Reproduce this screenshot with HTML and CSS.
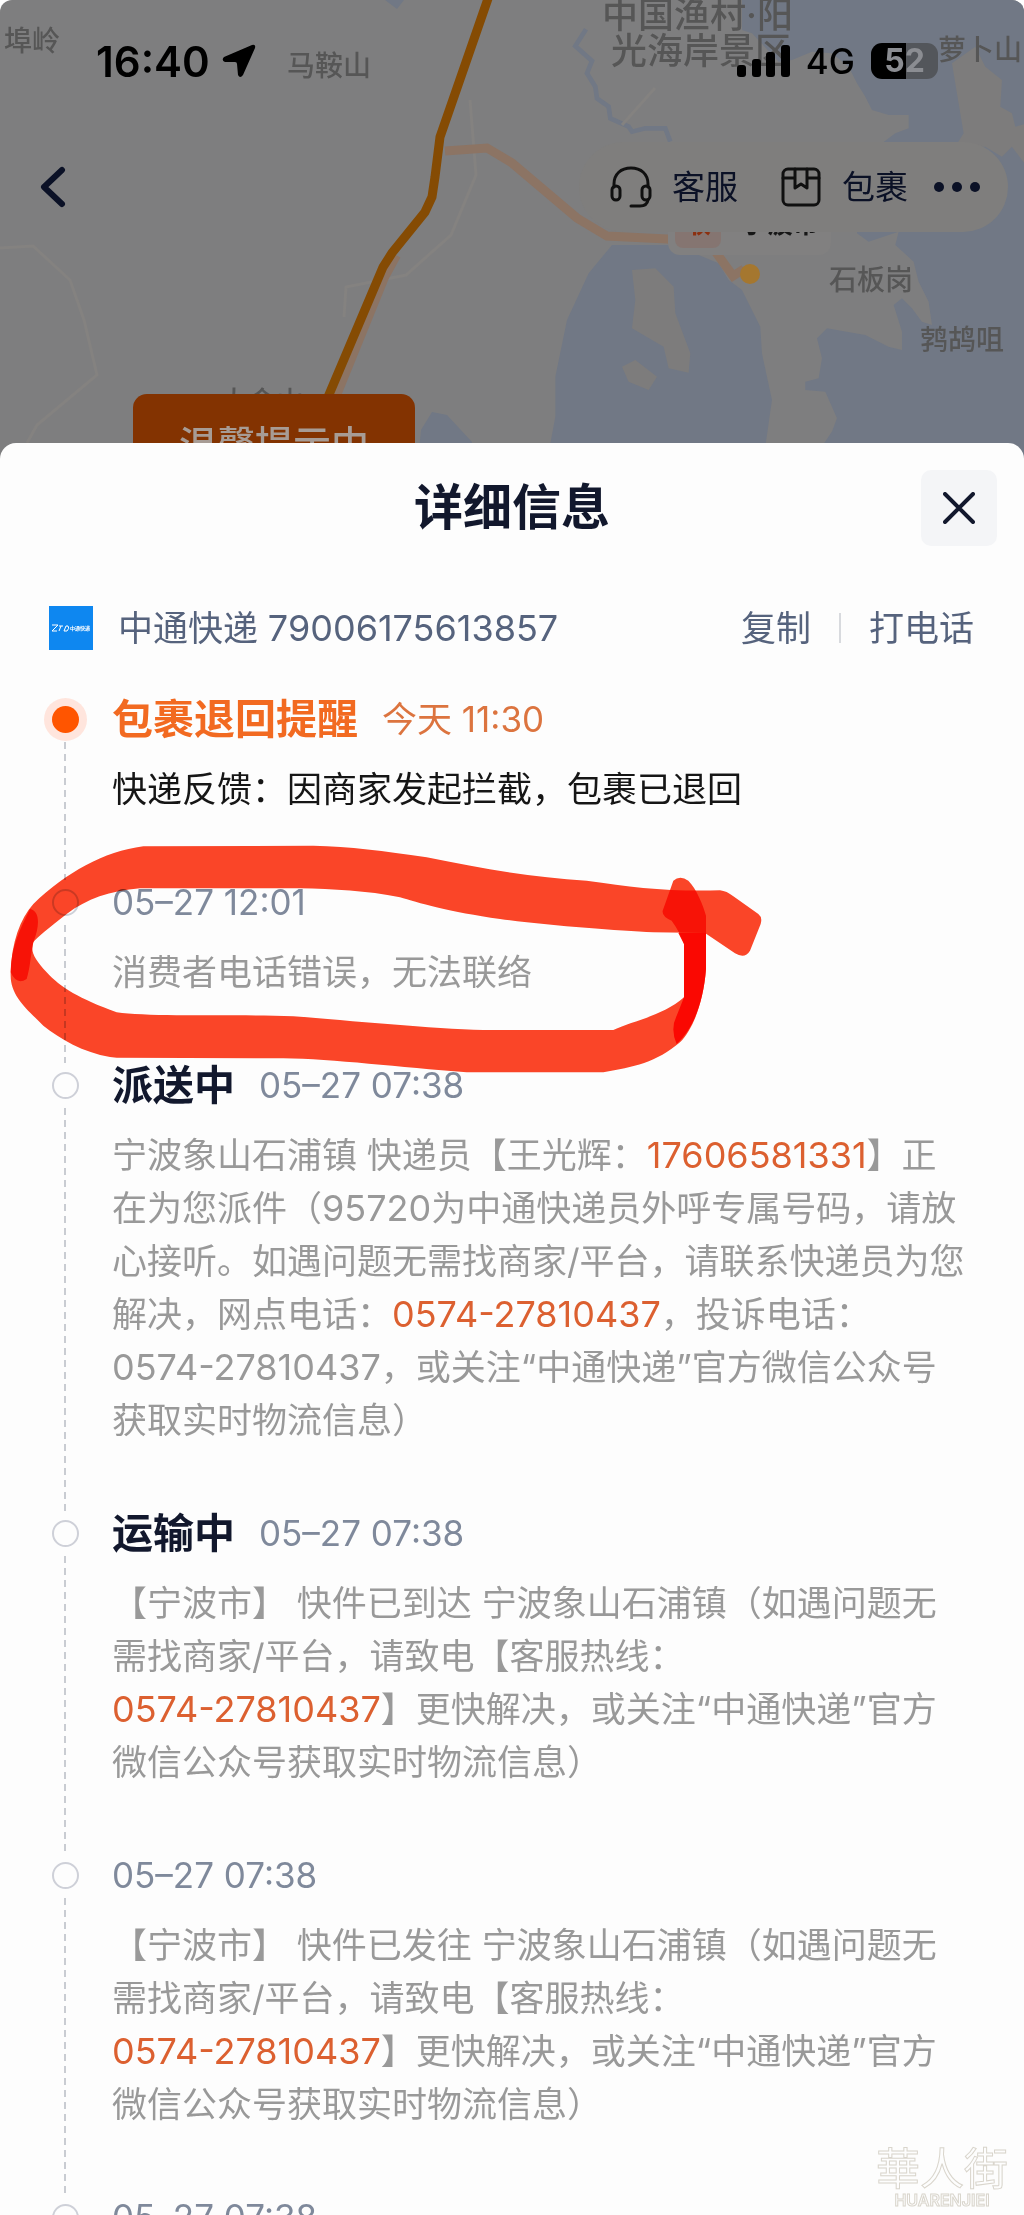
FILE: index.html
```html
<!DOCTYPE html>
<html lang="zh-CN">
<head>
    <meta charset="UTF-8">
    <meta name="viewport" content="width=device-width, initial-scale=1.0">
    <title>详细信息</title>
    <link rel="stylesheet" href="styles.css">
</head>
<body>
    <div class="app">
        <!-- 地图背景 -->
        <svg class="map" viewBox="0 0 1024 470" preserveAspectRatio="xMidYMin slice">
            <rect width="1024" height="470" fill="#7e7e7f"/>
            <g fill="#717885">
                <path d="M385 0l12 9 7-9zM421 430l11-18 15 3 25 27v28h-55z"/>
                <g transform="translate(512 0) scale(.3333)">
                    <path d="M690 0V90l30 10 80 85 40-5 60-25 60 5 50 40 25 50 25 40 20 40 50 15h60v40l-40 15-80 60-35 240 35 25 90-30-10 40 55 50 15 60 30 60 10 70-30-10-30-40-30-30-25 20 25 80v55l-40-10-70-35-115-20-30 30 15 60-10 60-40 10v25l60 5 35 80-15 40-60 90H1545V0z"/>
                    <path d="M300 735l-70 85-65 140-35 170v120l-30 160h650l30-210-30-140-5-80-55-110-40-30-30-50-60-25-90-30z"/>
                    <path fill="#7d7c7c" d="M1320 190l70-50 30 60 50 40-5 80 35 20 10 40 35-10v130l-45-60-30 30-50-30h-90l25-40zM360 810l70-5 55 55 5 80 45 120-5 58-60-13-15-65-95-55 10-85zM330 1100l40-20 65 50-25 40-60-25z"/>
                    <path fill="none" stroke="#717885" stroke-width="14" d="M222 88l-32 50 50 45-15 37 25 40 5 35 35 25 5 35 55 25 10 15 40-10h60l15 40"/>
                </g>
            </g>
            <g fill="none" stroke="#848280" stroke-width="3">
                <path d="M0 248l33-2 37 34 14 40 13 55-60 50-10 18M470 100l6 75-25 60-45 40-60 12-2 30M655 88l-33 37"/>
            </g>
            <path d="M445 151l42-3 25 15 65 55 30 18 60 3 48 12 18 25 11-7" fill="none" stroke="#8c7464" stroke-width="9"/>
            <path d="M396 255l-12 22-48 118" fill="none" stroke="#8c7464" stroke-width="10"/>
            <path d="M491-10l-51 147-5 40-3 20-7 15-33 41-9 14-55 130" fill="none" stroke="#854b03" stroke-width="9"/>
            <rect x="668" y="200" width="163" height="55" rx="12" fill="#818080"/>
            <rect x="675" y="205" width="46" height="43" rx="8" fill="#857571"/>
            <circle cx="750" cy="274" r="10" fill="#a5772f"/>
            <g class="map-label">
                <text x="4" y="51">埠岭</text>
                <text x="287" y="76">马鞍山</text>
                <text x="220" y="412">大金山</text>
                <text x="938" y="60">萝卜山</text>
                <text x="829" y="290">石板岗</text>
                <text x="920" y="350">鹁鸪咀</text>
            </g>
            <g class="map-label map-label-large">
                <text x="602" y="28">中国渔村·阳</text>
                <text x="611" y="64">光海岸景区</text>
            </g>
            <text class="map-tag" x="685" y="233">收</text>
            <text class="map-place" x="741" y="233">宁波市</text>
        </svg>
        <div class="notice">温馨提示中</div>

        <header class="top">
            <div class="status-bar">
                <div class="status-left">
                    <span class="clock">16:40</span>
                    <svg width="34" height="34" viewBox="0 0 34 34"><path d="M30 1Q34 0 33 4L21 31Q18 35 16 31L15 20Q15 18 13 18H3Q-1 16 2 13z"/></svg>
                </div>
                <div class="status-right">
                    <svg width="53" height="32" viewBox="0 0 53 32"><rect y="20" width="9" height="12" rx="3"/><rect x="15" y="14" width="9" height="18" rx="3"/><rect x="29" y="7" width="9" height="25" rx="3"/><rect x="44" width="9" height="32" rx="3"/></svg>
                    <span class="network">4G</span>
                    <span class="battery">52</span>
                </div>
            </div>
            <nav class="nav">
                <button class="back" aria-label="返回">
                    <svg width="26" height="42" viewBox="0 0 26 42"><path d="M22 4L4 21l18 17"/></svg>
                </button>
                <div class="pill">
                    <button class="pill-btn">
                        <svg width="42" height="42" viewBox="0 0 42 42"><path d="M4 21V18C4 8 11 2 21 2S38 8 38 18V21M38 34Q37 40 30 40H21"/><rect x="2" y="20" width="8" height="14" rx="4"/><rect x="32" y="20" width="8" height="14" rx="4"/></svg>
                        客服
                    </button>
                    <button class="pill-btn">
                        <svg width="42" height="42" viewBox="0 0 42 42"><rect x="3" y="3" width="36" height="36" rx="5"/><path d="M3 12H15M27 12H39M15 3V22L21 18L27 22V3"/></svg>
                        包裹
                    </button>
                    <button class="more" aria-label="更多">
                        <svg width="46" height="12" viewBox="0 0 46 12"><circle cx="5" cy="6" r="5"/><circle cx="23" cy="6" r="5"/><circle cx="41" cy="6" r="5"/></svg>
                    </button>
                </div>
            </nav>
        </header>

        <!-- 详细信息弹层 -->
        <main class="sheet">
            <div class="sheet-header">
                <h1>详细信息</h1>
                <button class="close" aria-label="关闭">
                    <svg width="32" height="32" viewBox="0 0 32 32"><path d="M2 2L30 30M30 2L2 30"/></svg>
                </button>
            </div>

            <div class="carrier">
                <svg class="carrier-logo" viewBox="0 0 44 44">
                    <rect width="44" height="44" fill="#0e87f0"/>
                    <path d="M3 19H9L3 25H8M10 20H14M12 20L10 25M15 25L17 20H19Q21 22 18 25z" fill="none" stroke="#fff"/>
                    <text x="21" y="24" font-size="5" font-weight="700" fill="#fff">中通快递</text>
                </svg>
                <span class="carrier-name">中通快递 <span class="tel">79006175613857</span></span>
                <button class="link-btn">复制</button>
                <span class="divider"></span>
                <button class="link-btn">打电话</button>
            </div>

            <ol class="timeline">
                <li class="item active">
                    <div class="rail"><span class="dot"></span></div>
                    <div class="content">
                        <div class="item-head"><h2>包裹退回提醒</h2><time>今天 11:30</time></div>
                        <p>快递反馈：因商家发起拦截，包裹已退回</p>
                    </div>
                </li>
                <li class="item marked">
                    <div class="rail"><span class="dot"></span></div>
                    <div class="content">
                        <div class="item-head"><time>05–27 12:01</time></div>
                        <p>消费者电话错误，无法联络</p>
                    </div>
                    <!-- 手绘红圈 -->
                    <svg class="scribble" width="800" height="300" viewBox="0 0 2400 900">
                        <path fill="#fc4528" d="M32 430C35 340 60 270 100 225C200 130 310 68 430 52L940 50C1050 53 1150 65 1280 85C1450 120 1600 145 1760 155C1900 175 2000 188 2160 184Q2180 186 2200 202L2275 255Q2288 265 2282 285L2250 365Q2235 390 2205 373L2115 312L1960 310C1850 305 1650 290 1500 270C1350 250 1250 220 1200 205C1100 185 1000 180 900 178H420C330 185 260 210 200 255C150 295 110 325 100 340C92 380 90 420 80 450Q50 470 32 430z"/>
                        <path fill="#fc4528" d="M90 240C60 300 30 360 32 440C32 500 80 540 130 590C180 630 250 670 330 684L350 686L850 688C1000 690 1200 715 1400 730H1810C1900 715 1970 700 2040 640C2080 600 2110 520 2118 420V260C2110 230 2090 180 2065 155Q2040 138 2020 155L1988 245Q1985 262 2015 275Q2040 310 2052 345V505C1990 560 1900 575 1840 603H1450C1300 600 1050 575 880 562C700 555 450 565 350 550C240 510 180 475 140 430C105 390 90 370 100 340C120 290 120 245 90 240z"/>
                        <path fill="#ff1a08" d="M2052 345V505L2030 560Q2010 600 2030 645C2080 600 2110 520 2118 420V312H2035z"/>
                    </svg>
                </li>
                <li class="item">
                    <div class="rail"><span class="dot"></span></div>
                    <div class="content">
                        <div class="item-head"><h2>派送中</h2><time>05–27 07:38</time></div>
                        <p>宁波象山石浦镇 快递员【王光辉：<a class="tel" href="tel:17606581331">17606581331</a>】正<br>在为您派件（<span class="tel">95720</span>为中通快递员外呼专属号码，请放<br>心接听。如遇问题无需找商家/平台，请联系快递员为您<br>解决，网点电话：<a class="tel" href="tel:0574-27810437">0574-27810437</a>，投诉电话：<br><span class="tel">0574-27810437</span>，或关注“中通快递”官方微信公众号<br>获取实时物流信息）</p>
                    </div>
                </li>
                <li class="item">
                    <div class="rail"><span class="dot"></span></div>
                    <div class="content">
                        <div class="item-head"><h2>运输中</h2><time>05–27 07:38</time></div>
                        <p>【宁波市】 快件已到达 宁波象山石浦镇（如遇问题无<br>需找商家/平台，请致电【客服热线：<br><a class="tel" href="tel:0574-27810437">0574-27810437</a>】更快解决，或关注“中通快递”官方<br>微信公众号获取实时物流信息）</p>
                    </div>
                </li>
                <li class="item">
                    <div class="rail"><span class="dot"></span></div>
                    <div class="content">
                        <div class="item-head"><time>05–27 07:38</time></div>
                        <p>【宁波市】 快件已发往 宁波象山石浦镇（如遇问题无<br>需找商家/平台，请致电【客服热线：<br><a class="tel" href="tel:0574-27810437">0574-27810437</a>】更快解决，或关注“中通快递”官方<br>微信公众号获取实时物流信息）</p>
                    </div>
                </li>
                <li class="item">
                    <div class="rail"><span class="dot"></span></div>
                    <div class="content">
                        <div class="item-head"><time>05–27 07:38</time></div>
                    </div>
                </li>
            </ol>
        </main>

        <div class="watermark">
            <span class="watermark-name">華人街</span>
            <span class="watermark-latin">HUARENJIEI</span>
        </div>
    </div>
</body>
</html>
```
FILE: styles.css
```css
* {
    margin: 0;
    padding: 0;
    box-sizing: border-box;
}

body {
    background: #fff;
    font-family: Inter, "Noto Sans CJK SC", sans-serif;
    font-size: 35px;
    line-height: 53px;
    text-spacing-trim: space-all;
}

button {
    border: none;
    background: none;
    font: inherit;
    color: inherit;
    cursor: pointer;
}

svg {
    display: block;
    flex: none;
}

.app {
    position: relative;
    height: 100vh;
    overflow: hidden;
    border-radius: 12px 12px 0 0;
    display: flex;
    flex-direction: column;
}

/* 地图 */
.map {
    position: absolute;
    top: 0;
    left: 0;
    width: 100%;
    height: 470px;
}

.map-label {
    font-size: 28px;
    font-weight: 500;
    fill: #565656;
}

.map-label-large {
    font-size: 36px;
}

.map-tag {
    font-size: 26px;
    font-weight: 700;
    fill: #8c3010;
}

.map-place {
    font-size: 26px;
    font-weight: 700;
    fill: #161616;
}

.notice {
    position: absolute;
    top: 394px;
    left: 13%;
    padding: 24px 46px;
    border-radius: 14px;
    background: #833301;
    color: #a79c95;
    font-size: 38px;
    font-weight: 500;
}

/* 顶部栏 */
.top {
    position: relative;
    height: 443px;
    flex: none;
    padding: 36px 16px 0 40px;
}

.status-bar {
    display: flex;
    justify-content: space-between;
    align-items: center;
    height: 50px;
    padding: 0 70px 0 56px;
}

.status-left,
.status-right {
    display: flex;
    align-items: center;
    gap: 16px;
}

.status-left {
    gap: 12px;
}

.clock {
    font-size: 42px;
    font-weight: 600;
}

.network {
    font-size: 35px;
    font-weight: 500;
}

.battery {
    width: 67px;
    height: 36px;
    border-radius: 11px;
    background: linear-gradient(to right, #000 52%, #53565b 52%);
    color: #8b8d92;
    font-size: 32px;
    line-height: 36px;
    font-weight: 700;
    text-align: center;
}

.nav {
    display: flex;
    justify-content: space-between;
    align-items: center;
    margin-top: 56px;
    color: #0b1126;
}

.back path {
    fill: none;
    stroke: #0b1126;
    stroke-width: 6;
    stroke-linecap: round;
    stroke-linejoin: round;
}

.pill {
    display: flex;
    align-items: center;
    gap: 42px;
    height: 90px;
    padding: 0 28px 0 31px;
    border-radius: 45px;
    background: #7f7e7d;
    font-size: 33px;
}

.pill-btn {
    display: flex;
    align-items: center;
    gap: 20px;
}

.pill-btn svg {
    fill: none;
    stroke: #101010;
    stroke-width: 3;
    stroke-linecap: round;
    stroke-linejoin: round;
}

.more {
    margin-left: -16px;
}

.more svg {
    fill: #0b1126;
}

/* 弹层 */
.sheet {
    position: relative;
    flex: 1;
    min-height: 0;
    overflow: hidden;
    border-radius: 16px 16px 0 0;
    background: #fdfdfd;
}

.sheet-header {
    display: grid;
    grid-template-columns: 76px 1fr 76px;
    align-items: center;
    padding: 27px 27px 0;
}

.sheet-header h1 {
    grid-column: 2;
    font-size: 49px;
    line-height: 76px;
    font-weight: 700;
    text-align: center;
    color: #12182d;
}

.close {
    display: flex;
    justify-content: center;
    align-items: center;
    width: 76px;
    height: 76px;
    border-radius: 10px;
    background: #f4f5f7;
}

.close path {
    stroke: #12182d;
    stroke-width: 4;
    stroke-linecap: round;
}

.carrier {
    display: flex;
    align-items: center;
    height: 44px;
    margin: 60px 50px 43px 49px;
    color: #56637d;
}

.carrier-logo {
    width: 44px;
    height: 44px;
    margin-right: 25px;
}

.carrier-name {
    flex: 1;
}

.divider {
    width: 2px;
    height: 30px;
    margin: 0 28px;
    background: #d8dade;
}

.tel {
    font-size: 36px;
    white-space: nowrap;
}

/* 物流时间线 */
.timeline {
    list-style: none;
    padding: 0 43px;
}

.item {
    position: relative;
    display: flex;
    gap: 25px;
}

.rail {
    display: flex;
    flex-direction: column;
    align-items: center;
    flex: none;
    width: 44px;
    padding-top: 13px;
}

.rail::after {
    content: "";
    flex: 1;
    width: 2px;
    margin: 9px 0 -4px;
    background: repeating-linear-gradient(#c9ccd2 0 7px, transparent 7px 12px);
}

.dot {
    width: 27px;
    height: 27px;
    border: 2px solid #ced0d8;
    border-radius: 50%;
}

.active .dot {
    border: none;
    background: #ff5500;
    box-shadow: 0 0 0 8px #ffe5dd;
}

.content {
    flex: 1;
    min-width: 0;
    padding-bottom: 60px;
}

.item-head {
    display: flex;
    align-items: center;
    gap: 24px;
    height: 53px;
    margin-bottom: 17px;
}

.item-head h2 {
    font-size: 41px;
    font-weight: 700;
    color: #12182d;
}

.item-head time {
    color: #7f899b;
}

.active h2 {
    color: #f26a21;
}

.active time {
    color: #dc743f;
}

.content p {
    color: #999;
}

.active p {
    color: #161616;
}

.content a {
    color: #dc6030;
    text-decoration: none;
}

.scribble {
    position: absolute;
    top: -47px;
    left: -43px;
    mix-blend-mode: multiply;
    pointer-events: none;
}

.scribble path {
    mix-blend-mode: multiply;
}

/* 水印 */
.watermark {
    position: absolute;
    right: 16px;
    bottom: 6px;
    display: flex;
    flex-direction: column;
    align-items: center;
    color: #fdfdfd;
    -webkit-text-stroke: 1px #d9d5cc;
}

.watermark-name {
    font-size: 44px;
    line-height: 44px;
}

.watermark-latin {
    font-size: 16px;
    line-height: 18px;
    font-weight: 600;
}
```
